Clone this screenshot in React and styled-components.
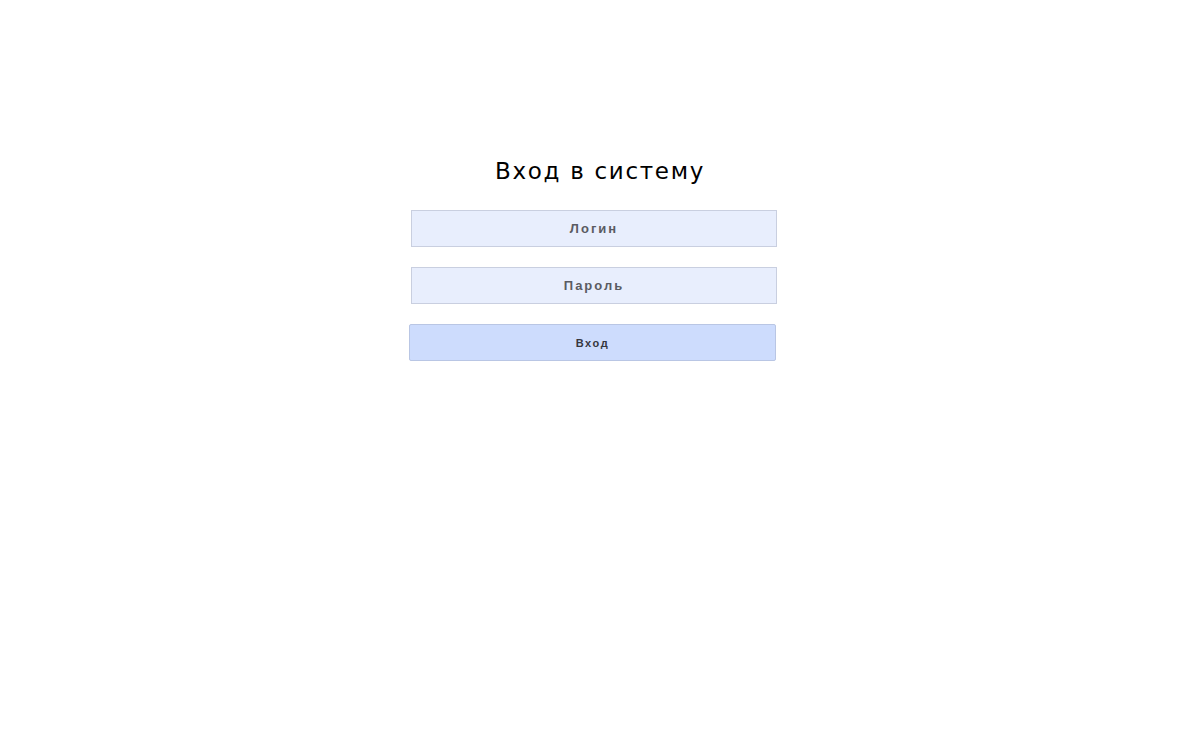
import React from "react";
import styled, { createGlobalStyle } from "styled-components";

const Global = createGlobalStyle`
  html, body { margin: 0; padding: 0; background: #ffffff; }
  body { font-family: "Liberation Sans", Arial, sans-serif; }
`;

const Page = styled.div`
  width: 1200px;
  min-height: 740px;
  display: flex;
  justify-content: center;
  align-items: flex-start;
`;

const Form = styled.form`
  width: 382px;
  margin-top: 156px;
  display: flex;
  flex-direction: column;
`;

const Title = styled.h1`
  margin: 0 0 24px;
  font-family: "DejaVu Sans", Verdana, sans-serif;
  font-weight: 400;
  font-size: 23px;
  line-height: 30px;
  letter-spacing: 1.7px;
  color: #000000;
  text-align: center;
`;

const Field = styled.input`
  box-sizing: border-box;
  width: 366px;
  height: 37px;
  margin: 0 0 20px 2px;
  padding: 0 8px 1px;
  border: 1px solid #c9cfe0;
  background: #e8eefd;
  font-family: "Liberation Sans", Arial, sans-serif;
  font-weight: 700;
  font-size: 13px;
  letter-spacing: 2px;
  color: #333;
  text-align: center;
  outline: none;
  &::placeholder {
    color: #5a5b62;
    opacity: 1;
  }
`;

const Submit = styled.button`
  box-sizing: border-box;
  width: 367px;
  height: 37px;
  margin: 0;
  padding: 0;
  border: 1px solid #b9c6e4;
  border-radius: 2px;
  background: #cddcfd;
  font-family: "Liberation Sans", Arial, sans-serif;
  font-weight: 700;
  font-size: 11px;
  letter-spacing: 1.6px;
  color: #36373e;
  cursor: pointer;
`;

export default function App() {
  return (
    <>
      <Global />
      <Page>
        <Form onSubmit={(e) => e.preventDefault()}>
          <Title>Вход в систему</Title>
          <Field type="text" placeholder="Логин" />
          <Field type="password" placeholder="Пароль" />
          <Submit type="submit">Вход</Submit>
        </Form>
      </Page>
    </>
  );
}
